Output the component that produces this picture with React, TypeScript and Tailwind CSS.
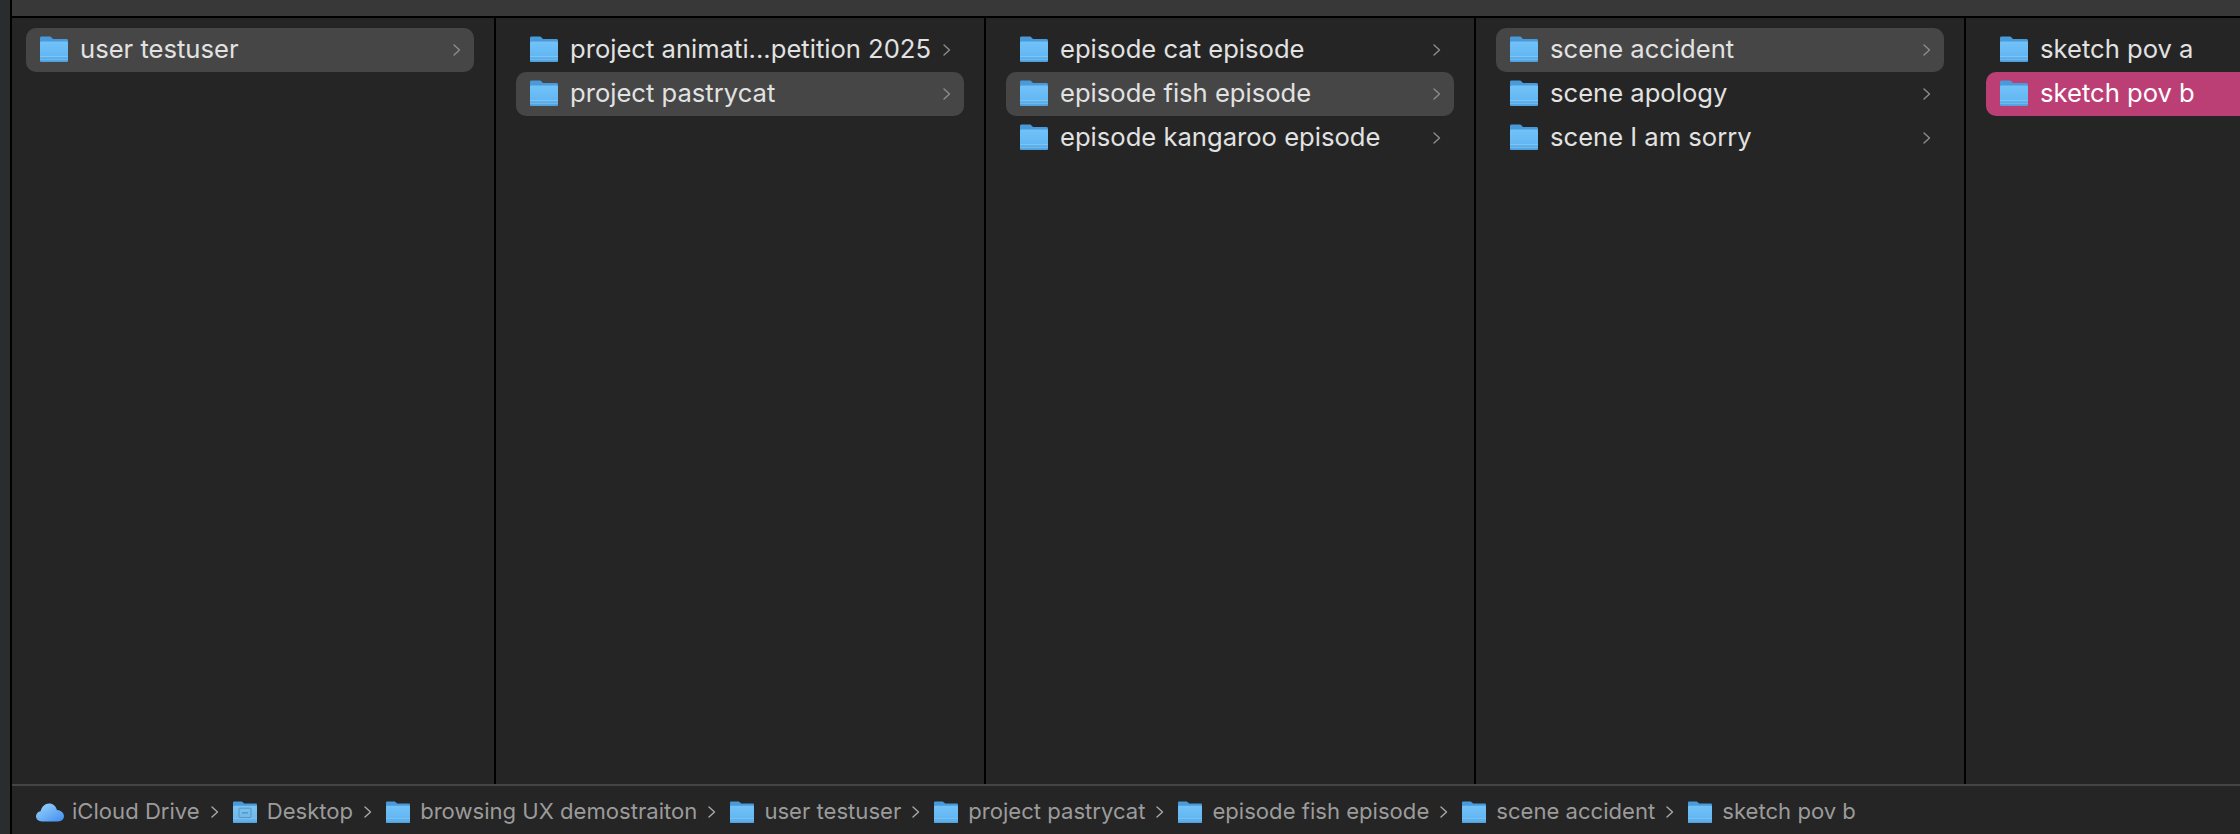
import React from 'react';

const FONT = "font-['Inter','Liberation_Sans',sans-serif]";

function Folder({ small = false, desktop = false, id }: { small?: boolean; desktop?: boolean; id: string }) {
  return (
    <svg
      viewBox="0 0 28 26"
      className={small ? 'w-[24px] h-[22px] shrink-0' : 'w-[28px] h-[26px] shrink-0 -mt-[2px]'}
      preserveAspectRatio="none"
    >
      <defs>
        <linearGradient id={id} x1="0" y1="0" x2="0" y2="1">
          <stop offset="0" stopColor={desktop ? '#7cc4f2' : '#72c2f8'} />
          <stop offset="0.7" stopColor={desktop ? '#72b8e8' : '#63b7f2'} />
          <stop offset="1" stopColor="#4f9fdf" />
        </linearGradient>
      </defs>
      <path
        d="M1.5 0.5H9.5C10.5 0.5 11 1 11.8 1.8L13 3H26.5C27.4 3 28 3.6 28 4.5V24.5C28 25.4 27.4 26 26.5 26H1.5C0.6 26 0 25.4 0 24.5V2C0 1.1 0.6 0.5 1.5 0.5Z"
        fill="#4a9ad9"
      />
      <path
        d="M0 7C0 6 0.6 5.5 1.5 5.5H26.5C27.4 5.5 28 6 28 7V24.5C28 25.4 27.4 26 26.5 26H1.5C0.6 26 0 25.4 0 24.5Z"
        fill={`url(#${id})`}
      />
      <rect x="0" y="20" width="28" height="1" fill="#8fd0f7" opacity="0.6" />
      <rect x="0" y="23" width="28" height="1" fill="#8fd0f7" opacity="0.4" />
      {desktop && (
        <g fill="none" stroke="#4f93c8" strokeWidth="1.1">
          <rect x="7" y="8.5" width="14" height="11" rx="0.8" />
          <path d="M10.5 14H17.5" strokeWidth="1.6" />
        </g>
      )}
    </svg>
  );
}

function Chevron({ tone = '#8c8c8c' }: { tone?: string }) {
  return (
    <svg viewBox="0 0 8 12" className="w-[8px] h-[12px] shrink-0" fill="none">
      <path d="M1 1L6.5 6L1 11" stroke={tone} strokeWidth="1.4" strokeLinecap="round" strokeLinejoin="round" />
    </svg>
  );
}

type RowData = { name: string; state?: 'open' | 'active' };

const COLUMNS: RowData[][] = [
  [{ name: 'user testuser', state: 'open' }],
  [{ name: 'project animati...petition 2025' }, { name: 'project pastrycat', state: 'open' }],
  [
    { name: 'episode cat episode' },
    { name: 'episode fish episode', state: 'open' },
    { name: 'episode kangaroo episode' },
  ],
  [{ name: 'scene accident', state: 'open' }, { name: 'scene apology' }, { name: 'scene I am sorry' }],
];

const LAST_COLUMN: RowData[] = [{ name: 'sketch pov a' }, { name: 'sketch pov b', state: 'active' }];

const PATH = [
  'Desktop',
  'browsing UX demostraiton',
  'user testuser',
  'project pastrycat',
  'episode fish episode',
  'scene accident',
  'sketch pov b',
];

function Row({ row, id }: { row: RowData; id: string }) {
  return (
    <div className={`h-[44px] flex items-center pl-[14px] pr-[13px] rounded-[10px] ${row.state === 'open' ? 'bg-[#464646]' : ''}`}>
      <Folder id={id} />
      <span className="ml-[12px] -mt-[2px] flex-1 whitespace-nowrap text-[25.6px] text-[#e2e2e2]">{row.name}</span>
      <Chevron />
    </div>
  );
}

export default function App() {
  return (
    <div className={`w-[2240px] h-[834px] flex overflow-hidden bg-[#252525] ${FONT}`}>
      <div className="w-[10px] shrink-0 bg-[#2a2d2e]" />
      <div className="w-[2px] shrink-0 bg-black" />
      <div className="flex-1 min-w-0 flex flex-col">
        <div className="h-[18px] shrink-0 bg-[#383838] border-b-2 border-black" />
        <div className="flex-1 min-h-0 flex">
          {COLUMNS.map((rows, c) => (
            <div
              key={c}
              className={`shrink-0 pt-[10px] pr-[20px] border-r-2 border-black ${
                c === 0 ? 'w-[484px] pl-[14px]' : 'w-[490px] pl-[20px]'
              }`}
            >
              {rows.map((row, r) => (
                <Row key={row.name} row={row} id={`f${c}-${r}`} />
              ))}
            </div>
          ))}
          <div className="flex-1 min-w-0 pt-[10px] pl-[20px] overflow-hidden">
            {LAST_COLUMN.map((row, r) => (
              <div
                key={row.name}
                className={`w-[300px] h-[44px] flex items-center pl-[14px] rounded-l-[10px] ${
                  row.state === 'active' ? 'bg-[#bb3f75]' : ''
                }`}
              >
                <Folder id={`l-${r}`} />
                <span
                  className={`ml-[12px] -mt-[2px] whitespace-nowrap text-[25.6px] ${
                    row.state === 'active' ? 'text-white' : 'text-[#e2e2e2]'
                  }`}
                >
                  {row.name}
                </span>
              </div>
            ))}
          </div>
        </div>
        <div className="h-[50px] shrink-0 border-t-2 border-[#444444] flex items-center pt-[4px] pl-[24px] text-[22.1px] text-[#9b9b9b]">
          <svg viewBox="0 0 28 18" className="w-[28px] h-[19px] shrink-0">
            <defs>
              <linearGradient id="cloud" x1="0" y1="0" x2="1" y2="1">
                <stop offset="0" stopColor="#9fd6fb" />
                <stop offset="1" stopColor="#3f8ef0" />
              </linearGradient>
            </defs>
            <path
              d="M6 18C2.6 18 0 15.8 0 12.8C0 10.2 1.9 8.2 4.6 7.8C5.6 3.2 9 0 13.2 0C17 0 20 2.6 20.9 6.4C24.9 6.6 28 9.2 28 12.6C28 15.8 25.6 18 22 18Z"
              fill="url(#cloud)"
            />
          </svg>
          <span className="ml-[8px] whitespace-nowrap">iCloud Drive</span>
          {PATH.map((name, i) => (
            <React.Fragment key={name}>
              <span className="ml-[11px] mr-[14px]">
                <Chevron tone="#a8a8a8" />
              </span>
              <Folder small desktop={i === 0} id={`p-${i}`} />
              <span className="ml-[10px] whitespace-nowrap">{name}</span>
            </React.Fragment>
          ))}
        </div>
      </div>
    </div>
  );
}
